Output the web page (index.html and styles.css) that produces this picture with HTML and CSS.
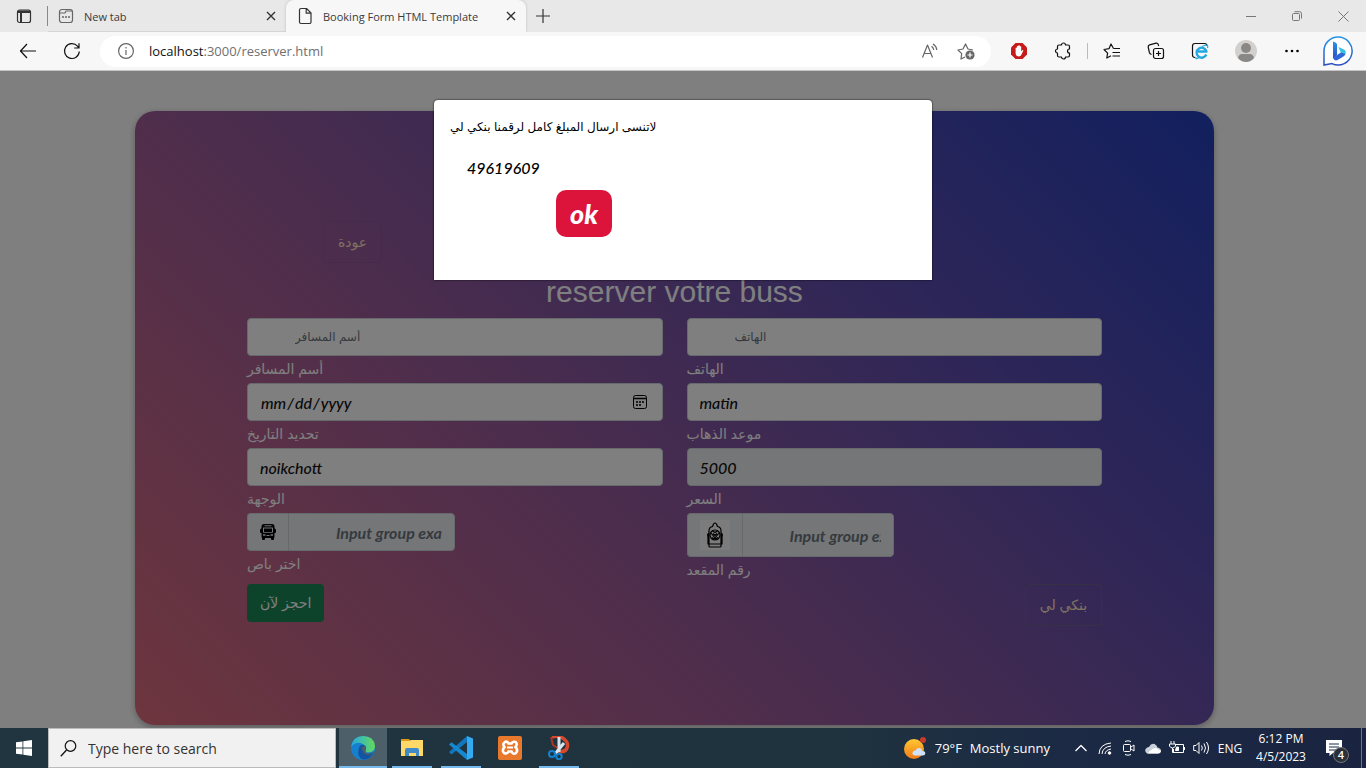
FILE: index.html
```html
<!DOCTYPE html>
<html lang="en">
<head>
<meta charset="utf-8">
<title>Booking Form HTML Template</title>
<link rel="stylesheet" href="styles.css">
</head>
<body>
<header class="browser">
  <div class="tabs">
    <button class="tab-menu" aria-label="Tab actions"><svg width="16" height="16" viewBox="0 0 16 16" class="line"><rect x="1.5" y="2" width="13" height="12.5" rx="2"/><path d="M1.5 4h13M2 3.4h12M5 4v10" stroke-width="2"/></svg></button>
    <div class="tab">
      <svg width="16" height="16" viewBox="0 0 16 16" class="line soft"><rect x="1.5" y="1.5" width="13" height="13" rx="2.5"/><path d="M1.5 5H7l1-2h6"/><path d="M4 9h2M7 9h2M10 9h2" stroke-width="1.6"/></svg>
      <span>New tab</span>
      <button class="tab-close" aria-label="Close tab"><svg width="10" height="10" viewBox="0 0 10 10" class="line"><path d="M1 1l8 8M9 1L1 9" stroke-width="1.4"/></svg></button>
    </div>
    <div class="tab active">
      <svg width="16" height="18" viewBox="0 0 16 18" class="line"><path d="M4 1.5h5.500L14 6v9a1.500 1.500 0 0 1-1.500 1.500h-8.500A1.500 1.500 0 0 1 2.500 15V3A1.500 1.500 0 0 1 4 1.500zM9.200 1.800V6.200H13.800"/></svg>
      <span>Booking Form HTML Template</span>
      <button class="tab-close" aria-label="Close tab"><svg width="10" height="10" viewBox="0 0 10 10" class="line"><path d="M1 1l8 8M9 1L1 9" stroke-width="1.4"/></svg></button>
    </div>
    <button class="new-tab" aria-label="New tab"><svg width="14" height="14" viewBox="0 0 14 14" class="line"><path d="M7 0v14M0 7h14"/></svg></button>
    <div class="window-buttons">
      <button aria-label="Minimize"><svg width="10" height="10" viewBox="0 0 10 10" class="line faint"><path d="M0 5.500h10"/></svg></button>
      <button aria-label="Restore"><svg width="10" height="10" viewBox="0 0 10 10" class="line faint"><rect x=".5" y="2.500" width="7" height="7" rx="1"/><path d="M2.500 .7H7.500a2 2 0 0 1 2 2V7.500"/></svg></button>
      <button aria-label="Close"><svg width="11" height="11" viewBox="0 0 11 11" class="line faint"><path d="M.5 .5l10 10M10.500 .5l-10 10"/></svg></button>
    </div>
  </div>
  <div class="toolbar">
    <button class="tool" aria-label="Back"><svg width="18" height="16" viewBox="0 0 18 16" class="line dark"><path d="M8 1L1.500 8 8 15M1.500 8H17"/></svg></button>
    <button class="tool" aria-label="Refresh"><svg width="18" height="18" viewBox="0 0 18 18" class="line dark"><path d="M16.300 9.500A7.400 7.400 0 1 1 14.500 4.200L16 6M16 1.200V6h-4.800"/></svg></button>
    <div class="address">
      <svg width="16" height="16" viewBox="0 0 16 16" class="line soft"><circle cx="8" cy="8" r="7.400"/><path d="M8 7v5M8 4v1.400"/></svg>
      <div class="url"><b>localhost</b>:3000/reserver.html</div>
      <button aria-label="Read aloud"><svg width="18" height="16" viewBox="0 0 18 16" class="line soft"><path d="M1.500 14.500L6.500 2l5 12.500M3.200 10.500h6.600M10.500 3.200q2 1.300 2.200 3.800M12 1q3.500 2.200 3.800 6"/></svg></button>
      <button aria-label="Add to favorites"><svg width="18" height="18" viewBox="0 0 18 18" class="line soft"><path d="M8 15l-4 2 .7-5.300L1 8l5-1 2.500-5L11 7l5 1"/><circle cx="13" cy="13" r="4.600" fill="#666" stroke="none"/><path d="M13 10.500v5M10.500 13h5" stroke="#fff"/></svg></button>
    </div>
    <button class="tool" aria-label="Ad blocker"><svg width="18" height="18" viewBox="0 0 18 18"><path d="M5.500 1h7L17 5.500v7L12.500 17h-7L1 12.500v-7z" fill="#c61b1b"/><path d="M5.600 10V6q.7-.8 1.300 0V4.300q.7-.8 1.400 0V3.600q.8-.8 1.500 0v1q.7-.7 1.400 0V9.500l1-1.300q.8-.6 1.200.2L11.500 12.500Q10.700 14.500 8.800 14.500 5.600 14.500 5.600 11z" fill="#fff"/></svg></button>
    <button class="tool" aria-label="Extensions"><svg width="18" height="18" viewBox="0 0 18 18" class="line dark"><path d="M5 3h2.500a2 2 0 0 1 4 0H14q1.500 0 1.500 1.500V7a2 2 0 0 0 0 4v2.500Q15.500 15 14 15h-2.500a2 2 0 0 1-4 0H5q-1.500 0-1.500-1.500V11a2 2 0 0 1 0-4V4.500Q3.500 3 5 3z"/></svg></button>
    <span class="separator"></span>
    <button class="tool" aria-label="Favorites"><svg width="18" height="18" viewBox="0 0 18 18" class="line dark"><path d="M10.500 6.500L8 2 6 6.700 1 7.500l3.600 3.600L3.800 16 8 13.700M10.500 6.500H17M9.500 10.500H17M9.500 14H17"/></svg></button>
    <button class="tool" aria-label="Collections"><svg width="18" height="18" viewBox="0 0 18 18" class="line dark"><rect x="6.500" y="6.500" width="10" height="10" rx="2"/><path d="M11.500 9v5M9 11.500h5M4.500 12.500Q2.800 12 2.400 10.500L1.200 5Q1 3.300 2.600 2.900L9 1.200Q10.800 1 11.300 2.600L11.700 4"/></svg></button>
    <button class="tool" aria-label="Internet Explorer mode"><svg width="18" height="18" viewBox="0 0 18 18" class="line dark"><path d="M4 15.500Q1.500 15.500 1.500 13V4Q1.500 1.500 4 1.500H13.500Q16 1.500 16 4"/><path d="M15.300 12.500A5 5 0 1 1 15.500 9.500H7" stroke="#25a7df" stroke-width="2.400"/><path d="M5 15Q4 18 8 15.500M11 4.500Q18 1 16.500 6" stroke="#25a7df"/></svg></button>
    <button class="tool wide" aria-label="Profile"><svg width="22" height="22" viewBox="0 0 22 22"><circle cx="11" cy="11" r="11" fill="#d2d0ce"/><circle cx="11" cy="8" r="5" fill="#8a8886"/><path d="M3 18q1-4 4-4h8q3 0 4 4-3.500 4-8 4t-8-4z" fill="#8a8886"/></svg></button>
    <button class="tool" aria-label="Settings and more"><svg width="16" height="4" viewBox="0 0 16 4"><circle cx="2.500" cy="2" r="1.300"/><circle cx="8" cy="2" r="1.300"/><circle cx="13.500" cy="2" r="1.300"/></svg></button>
    <button class="tool wide" aria-label="Bing"><svg width="32" height="32" viewBox="0 0 32 32"><defs><linearGradient id="bing" x2="0" y2="1"><stop stop-color="#2596e8"/><stop offset="1" stop-color="#2c4fc0"/></linearGradient></defs><path d="M16 2a14 14 0 1 1-6 26.600L2 30V16A14 14 0 0 1 16 2z" fill="#fff" stroke="url(#bing)" stroke-width="1.500"/><path d="M11 6.500q3 .5 4 2.500v11l-4 4z" fill="url(#bing)"/><path d="M16.500 12l5.500 2.500q3 2 1 5.500l-4-2z" fill="#35c3e3"/><path d="M11 22.500l4-2.500 4-2.500 4.500 1.500q-1 2-2.500 2.800l-5 3q-3.500 2-5-2.300z" fill="#3067d8"/></svg></button>
  </div>
</header>

<main class="page">
  <form class="card">
    <div class="back"><button type="button" class="btn outline" dir="rtl">عودة</button></div>
    <h1>reserver votre buss</h1>
    <div class="fields">
      <div class="field"><input id="name" class="control indent" placeholder="أسم المسافر"><label for="name">أسم المسافر</label></div>
      <div class="field"><input id="phone" class="control indent" placeholder="الهاتف"><label for="phone">الهاتف</label></div>
      <div class="field"><input id="date" type="date" class="control"><label for="date">تحديد التاريخ</label></div>
      <div class="field"><select id="time" class="control"><option>matin</option></select><label for="time">موعد الذهاب</label></div>
      <div class="field"><select id="city" class="control"><option>noikchott</option></select><label for="city">الوجهة</label></div>
      <div class="field"><input id="price" class="control muted" value="5000" readonly><label for="price">السعر</label></div>
      <div class="field">
        <div class="group">
          <span class="addon"><svg width="16" height="16" viewBox="0 0 16 16"><path d="M4 0h8q2.500 0 2.500 3v1.500q1.500 0 1.500 1.500v2q0 1-1 1h-.5v4.500H14V15q0 1-1 1h-1q-1 0-1-1v-1H5v1q0 1-1 1H3q-1 0-1-1v-1.500H1.500V9H1Q0 9 0 8V6q0-1.500 1.500-1.500V3Q1.500 0 4 0zM4.500 1.300v1h7v-1zM3 3.500V8.500q5 1 10 0V3.500zM3 10.300v1.500h2.500v-1.500zM6.500 11v1h3v-1zM10.500 10.300v1.500H13v-1.500z" fill-rule="evenodd"/><path d="M4 4.500h8v3.500q-4 .7-8 0z"/></svg></span>
          <input id="bus" class="control muted indent" placeholder="Input group example">
        </div>
        <label for="bus">اختر باص</label>
      </div>
      <div class="field">
        <div class="group">
          <span class="addon"><span class="seat"><svg width="18" height="26" viewBox="0 0 18 26" class="line black"><path d="M3 9Q3 5 6.500 4.500L7.500 2Q9 0 10.500 2L11.500 4.500Q15 5 15 9v15q0 1-1 1H4q-1 0-1-1zM3 11Q1 12 2 15v7h14v-7q1-3-1-4"/><circle cx="9" cy="13" r="5"/><path d="M5 11l4 5 4-5M7 11.500l2 2 2-2M6 15.500q3 3 6 0M6 8.500l3 2 3-2"/></svg></span></span>
          <input id="seat" class="control muted indent" placeholder="Input group example">
        </div>
        <label for="seat">رقم المقعد</label>
      </div>
    </div>
    <div class="actions">
      <button type="button" class="btn success" dir="rtl">احجز لآن</button>
      <button type="button" class="btn outline" dir="rtl">بنكي لي</button>
    </div>
  </form>
  <div class="backdrop">
    <section class="dialog" role="dialog" aria-label="Payment">
      <p class="note"><bdi>لاتنسى ارسال المبلغ كامل لرقمنا بنكي لي</bdi></p>
      <p class="number">49619609</p>
      <button class="ok">ok</button>
    </section>
  </div>
</main>

<footer class="taskbar">
  <button class="start" aria-label="Start"><svg width="16" height="16" viewBox="0 0 16 16" fill="#fff"><path d="M0 2.300L6.500 1.400V7.600H0zM7.300 1.300L16 0V7.600H7.300zM0 8.400H6.500V14.600L0 13.700zM7.300 8.400H16V16L7.300 14.700z"/></svg></button>
  <label class="search"><svg width="17" height="17" viewBox="0 0 17 17" class="line dark"><circle cx="10.500" cy="6" r="5.300"/><path d="M6.500 10L.8 16.200" stroke-width="1.300"/></svg><input type="text" placeholder="Type here to search" aria-label="Type here to search"></label>
  <nav class="apps">
    <button class="app current" aria-label="Edge"><svg width="24" height="24" viewBox="0 0 24 24"><defs><linearGradient id="eg"><stop stop-color="#27a9df"/><stop offset="1" stop-color="#63d95b"/></linearGradient></defs><circle cx="12" cy="12" r="12" fill="#1680cf"/><path d="M0 11Q2 0 12 0 23 0 24 10 24 16 17 16.500q-4 0-2.500-2.500Q16 9 9.500 7 4 6 0 11z" fill="url(#eg)"/><path d="M8 12q1-4 5-3 3 1.500 1.500 5-1 3.500 4 3.500 2.500 0 4.500-1.500-4 8-11 7.500Q5 21 8 12z" fill="#1355a0"/><path d="M11 11q3-1.500 4 .5 0 1-.5 2-1.500 3.500 3 4 2.500 0 5-1.500-2 3-5 3-7-1-6.500-8z" fill="#4d5f68"/></svg></button>
    <button class="app open" aria-label="File Explorer"><svg width="22" height="20" viewBox="0 0 22 20"><path d="M0 1h8l2 3h-10z" fill="#d89c18"/><path d="M0 3h8l2-1h12v16H0z" fill="#ffd968"/><path d="M4 18V12q0-2 2-2h10q2 0 2 2v6h-3v-3H8v3z" fill="#3f8bc9"/></svg></button>
    <button class="app open" aria-label="Visual Studio Code"><svg width="24" height="24" viewBox="0 0 24 24"><path d="M18 0v6L2.500 18.500 0 16z" fill="#1177bd"/><path d="M0 8.500l2.500-2.300L18 18v6z" fill="#1688d2"/><path d="M18 0l6 2.500v19L18 24z" fill="#35a9f2"/></svg></button>
    <button class="app" aria-label="XAMPP"><svg width="24" height="24" viewBox="0 0 24 24"><rect width="24" height="24" rx="2" fill="#e8782c"/><path d="M7 6q2-1 3.500 1.500h3Q15 5 17.500 6q2.500 2 0 5 3 3 .5 6-3 2-4.500-1.500h-3Q9 18.500 6 17q-2.500-3 .5-6-2.500-3 .5-5z" fill="none" stroke="#fff" stroke-width="2.600"/><path d="M9 11.500h6" stroke="#fff" stroke-width="2"/></svg></button>
    <button class="app open" aria-label="Snipping Tool"><svg width="22" height="24" viewBox="0 0 22 24" fill="none"><path d="M4 1q7-2 12 2t3 9-9 3" stroke="#d7492c" stroke-width="3.500"/><path d="M3 1l2 8 6 4" stroke="#a93726" stroke-width="2"/><path d="M11 1v15M16 7l-9 11" stroke="#d9e5ea" stroke-width="3"/><circle cx="4" cy="18" r="3" stroke="#1681cc" stroke-width="2"/><circle cx="11" cy="20.500" r="2.700" stroke="#1681cc" stroke-width="2"/></svg></button>
  </nav>
  <div class="tray">
    <button class="weather"><svg width="24" height="24" viewBox="0 0 24 24"><defs><linearGradient id="sun" x2="0" y2="1"><stop stop-color="#ffc832"/><stop offset="1" stop-color="#f17a18"/></linearGradient></defs><circle cx="11" cy="13" r="10" fill="url(#sun)"/><circle cx="20" cy="4" r="3" fill="#c83b2b"/><path d="M12 19.500q-3-.5-2.500-3 .5-2 3-2 1-3 4-2.500 2.500.5 2.800 3 3 0 3 2.200t-2.500 2.300z" fill="#cfe2fa"/></svg><span>79°F</span><span>Mostly sunny</span></button>
    <button class="tray-icon" aria-label="Hidden icons"><svg width="12" height="8" viewBox="0 0 12 8" class="line white"><path d="M.5 7L6 1.500 11.500 7" stroke-width="1.300"/></svg></button>
    <button class="tray-icon" aria-label="Wi-Fi"><svg width="14" height="14" viewBox="0 0 14 14" class="line white"><path d="M1 13Q1.500 3 13 2M4 13Q4.500 6 13 5M7 13Q7.500 9 13 8"/><circle cx="11.500" cy="12" r="1.300" fill="#fff"/></svg></button>
    <button class="tray-icon" aria-label="Meet now"><svg width="14" height="16" viewBox="0 0 14 16" class="line white"><rect x="1.500" y="4.500" width="7" height="7" rx="1"/><path d="M9 7l3-2v6L9 9M3 1.500q3-1.500 6 0M3 14.500q3 1.500 6 0"/></svg></button>
    <button class="tray-icon" aria-label="OneDrive"><svg width="16" height="11" viewBox="0 0 16 11"><path d="M2 10.500Q-1 8 1 5.500 2 4 4 4q2-4 5.500-3 2.500 1 3 3.500Q16 5 16 8q-.5 2.500-3 2.500z" fill="#c9d2da"/><path d="M2.500 10.500Q7 5 11 5l5 3q-.5 2.500-3 2.500z" fill="#fff"/></svg></button>
    <button class="tray-icon" aria-label="Battery"><svg width="16" height="14" viewBox="0 0 16 14" class="line white"><path d="M6 3.500h8.500v8H4.500V8M2 0v3M5 0v3M.5 3h6v2q-1 2-3 2t-3-2zM3.500 7v4.500h3"/><path d="M7.500 6h2v3.500h-3zM15.500 6v3" fill="#fff"/></svg></button>
    <button class="tray-icon" aria-label="Volume"><svg width="17" height="14" viewBox="0 0 17 14" class="line white"><path d="M.7 4.500H3l3-3v11l-3-3H.7zM8.500 4.500q1.700 2.500 0 5M11 2.500q3 4.500 0 9M13.500 1q4 6 0 12"/></svg></button>
    <button class="language">ENG</button>
    <button class="clock"><span>6:12 PM</span><span>4/5/2023</span></button>
    <button class="notice" aria-label="4 notifications"><svg width="16" height="16" viewBox="0 0 16 16"><path d="M0 0h16v13H7l-3.500 3V13H0z" fill="#fff"/><path d="M3 4h10M3 7h10M3 10h8" stroke="#1b2945"/></svg><span class="count">4</span></button>
    <button class="desktop" aria-label="Show desktop"></button>
  </div>
</footer>
</body>
</html>
```
FILE: styles.css
```css
* { box-sizing: border-box; }
html, body { margin: 0; height: 100%; }
body {
  display: flex;
  flex-direction: column;
  overflow: hidden;
  font-family: "Open Sans", "Noto Sans", sans-serif;
  font-size: 12px;
}
button { padding: 0; border: 0; background: none; font: inherit; color: inherit; }
input, select { font: inherit; }
svg { flex: none; display: block; }
.line { fill: none; stroke: #333; stroke-width: 1.2; stroke-linejoin: round; }
.soft { stroke: #666; }
.faint { stroke: #777; stroke-width: 1; }
.dark { stroke: #111; }
.black { stroke: #000; }
.white { stroke: #fff; stroke-width: 1; }

/* browser chrome */
.browser { flex: none; background: #f7f7f7; border-bottom: 1px solid #c4c4c4; }
.tabs { display: flex; height: 32px; background: #e8e8e8; color: #3b3b3b; font-size: 11px; }
.tab-menu { display: grid; place-items: center; width: 48px; position: relative; }
.tab-menu::after { content: ""; position: absolute; right: 0; top: 6px; width: 1px; height: 20px; background: #888; }
.tab { display: flex; align-items: center; width: 238px; padding: 0 9px 0 10px; gap: 10px; box-shadow: inset 0 -1px #d5d5d5; }
.tab span { flex: 1; white-space: nowrap; }
.tab.active { width: 240px; padding-left: 11px; background: #f7f7f7; border-radius: 8px 8px 0 0; box-shadow: 0 0 3px #bbb; clip-path: inset(0 -3px 0 -3px); }
.tab-close { display: grid; place-items: center; width: 12px; height: 20px; }
.new-tab { display: grid; place-items: center; width: 34px; }
.window-buttons { display: flex; margin-left: auto; }
.window-buttons button { display: grid; place-items: center; width: 46px; }
.toolbar { display: flex; align-items: center; height: 38px; padding: 0 4px 0 6px; }
.tool { display: grid; place-items: center; width: 44px; height: 34px; }
.tool.wide { width: 48px; }
.separator { width: 1px; height: 16px; margin: 0 2px; background: #bbb; }
.address { display: flex; align-items: center; flex: 1; height: 31px; margin: 0 6px; padding: 0 16px 0 18px; background: #fff; border-radius: 16px; }
.address button { margin-left: 18px; }
.url { flex: 1; margin-left: 15px; font-size: 13px; color: #707070; }
.url b { font-weight: 400; color: #111; }

/* booking page */
.page { position: relative; flex: 1; min-height: 0; padding: 40px 17px 0 0; background: #fff; overflow: hidden; }
.card {
  width: 80%;
  margin: 0 auto;
  padding: 110px 112px 99px;
  border-radius: 20px;
  background: linear-gradient(45deg, #dc6c7c 0%, #a05c98 36%, #5a4cb0 72%, #2440be 100%);
  box-shadow: 0 2px 6px rgba(0, 0, 0, .3);
  font-family: Lato, "DejaVu Sans", sans-serif;
  font-size: 16px;
}
.back { padding: 0 76px 11px; }
.btn { display: inline-block; height: 38px; padding: 0 12px; border: 1px solid transparent; border-radius: 4px; font-family: "Liberation Sans", "DejaVu Sans", sans-serif; font-size: 14px; }
.btn.outline { height: 42px; padding: 0 14px; border-color: rgba(110, 105, 125, .7); color: #ffe2c4; }
.back .btn { border-color: rgba(90, 80, 130, .2); }
.btn.success { background: #198754; color: #fff; }
h1 { margin: 0 0 8px; font: 400 30px/36px "Liberation Sans", sans-serif; text-align: center; color: #fff; }
.fields { display: grid; grid-template-columns: 1fr 1fr; column-gap: 24px; }
.field { display: flex; flex-direction: column; }
.field label { height: 27px; font: 14px/27px "Liberation Sans", "DejaVu Sans", sans-serif; color: #fff; }
.control {
  width: 100%;
  height: 38px;
  padding: 0 12px;
  border: 1px solid #ced4da;
  border-radius: 4px;
  background: #fff;
  color: #111;
  font-style: italic;
  font-weight: 500;
  appearance: none;
}
.control::-webkit-calendar-picker-indicator {
  width: 16px;
  height: 16px;
  padding: 0;
  margin-right: 2px;
  background: url("data:image/svg+xml,%3Csvg xmlns='http://www.w3.org/2000/svg' viewBox='0 0 16 16' fill='none' stroke='black'%3E%3Crect x='1.500' y='1.500' width='13' height='13' rx='2'/%3E%3Cpath d='M1.500 4.500h13M4 8h2M7 8h2M10 8h2M4 11h2M7 11h2' stroke-width='1.400'/%3E%3C/svg%3E") center / 16px no-repeat;
}
.control.indent { padding-left: 47px; }
.control::placeholder { color: #6c757d; opacity: 1; }
.control.muted { background: #e9ecef; }
.fields > .field > .control.indent { font: 12px "Liberation Sans", "DejaVu Sans", sans-serif; }
.group { display: flex; width: 50%; }
.addon { display: flex; align-items: center; padding: 0 12px; background: #e9ecef; border: 1px solid #ced4da; border-right: 0; border-radius: 4px 0 0 4px; }
.group .control { flex: 1; min-width: 0; height: auto; min-height: 38px; border-radius: 0 4px 4px 0; font-weight: 700; }
.seat { display: grid; place-items: center; width: 30px; height: 30px; margin: 6px 0; background: #f8f8f8; }
.actions { display: flex; justify-content: space-between; align-items: flex-start; }
.backdrop { position: absolute; inset: 0; padding: 29px 0 0; background: rgba(0, 0, 0, .5); }
.dialog { width: 498px; min-height: 180px; margin: 0 auto; padding: 16px; background: #fff; border-radius: 4px 4px 0 0; box-shadow: 0 0 2px #000; font-family: Lato, sans-serif; }
.note { margin: 0 0 18px; font: 12px/22px "Liberation Sans", "DejaVu Sans", sans-serif; }
.number { margin: 0 0 10px 17px; font-size: 16px; line-height: 24px; font-style: italic; font-weight: 500; }
.ok { display: block; width: 56px; height: 47px; margin-left: 106px; border-radius: 10px; background: #dc143c; color: #fff; font-size: 27px; font-style: italic; font-weight: 900; }

/* taskbar */
.taskbar { flex: none; display: flex; height: 40px; background: linear-gradient(90deg, #20353f 0%, #1f333e 60%, #1b2945 80%, #1a2440 100%); color: #fff; }
.start { display: grid; place-items: center; width: 48px; }
.search { display: flex; align-items: center; width: 288px; padding-left: 11px; gap: 9px; background: #f1f1f1; border: 1px solid #bbb; }
.search input { flex: 1; min-width: 0; border: 0; background: none; font-size: 14px; color: #333; }
.search input::placeholder { color: #333; opacity: 1; }
.apps { display: flex; gap: 1px; margin-left: 3px; }
.app { display: grid; place-items: center; width: 48px; position: relative; }
.app.current { background: #4d5f68; }
.app.current::after, .app.open::after { content: ""; position: absolute; left: 4px; right: 4px; bottom: 0; height: 2px; background: #76b9ed; }
.app.current::after { left: 0; right: 0; }
.tray { display: flex; margin-left: auto; }
.weather { display: flex; align-items: center; gap: 8px; margin-right: 19px; font-size: 13px; }
.tray-icon { display: grid; place-items: center; width: 24px; }
.language { width: 34px; }
.clock { display: flex; flex-direction: column; align-items: center; justify-content: center; width: 68px; line-height: 18px; font-size: 12px; }
.notice { display: grid; place-items: center; position: relative; width: 38px; margin-right: 8px; }
.count { position: absolute; right: 4px; bottom: 5px; width: 16px; height: 16px; border: 1px solid #777; border-radius: 50%; background: #2b303a; font-size: 11px; line-height: 14px; font-weight: 600; }
.desktop { width: 5px; border-left: 1px solid #6b7485; }
```
